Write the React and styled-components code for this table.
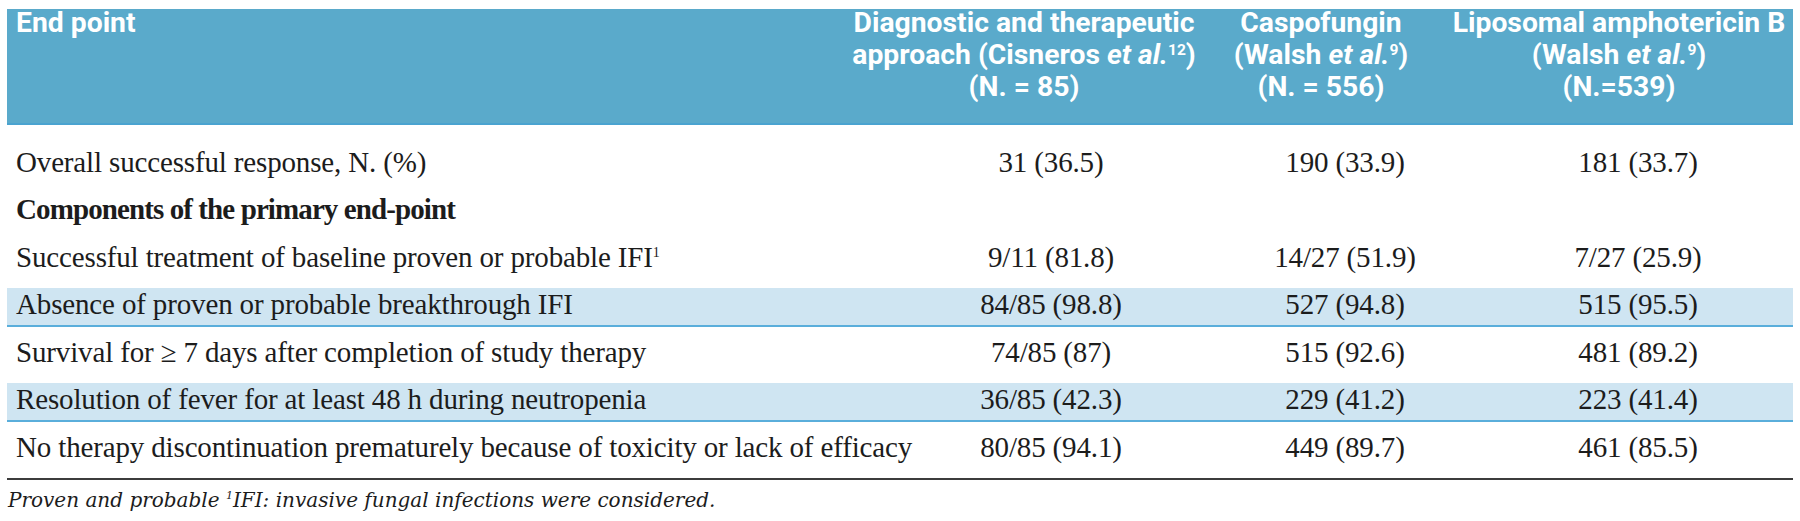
import styled, { createGlobalStyle } from "styled-components";

const GlobalStyle = createGlobalStyle`
  body {
    margin: 0;
    background: #ffffff;
  }
`;

const Page = styled.div`
  padding: 9px 7px 0;
  width: 1786px;
`;

const Table = styled.div`
  display: flex;
  flex-direction: column;
`;

const columns = "898px 292px 296px 290px";

const HeaderRow = styled.div`
  display: grid;
  grid-template-columns: ${columns};
  box-sizing: border-box;
  height: 116px;
  padding-right: 10px;
  background: #5aaacb;
  border-bottom: 2px solid #4aa3d0;
  color: #ffffff;
  font-family: Roboto, "Roboto Condensed", "Liberation Sans", sans-serif;
  font-stretch: 88%;
  font-weight: 700;
  font-size: 28.3px;
  line-height: 32px;
`;

const HeadCell = styled.div`
  display: flex;
  flex-direction: column;
  align-items: ${(p) => (p.$left ? "flex-start" : "center")};
  margin-top: -2px;
  padding-left: ${(p) => (p.$left ? "9px" : "0")};
  padding-right: ${(p) => p.$shift || 0}px;
`;

const HeadLine = styled.span`
  white-space: nowrap;
`;

const Sup = styled.sup`
  font-size: ${(p) => p.$size || "0.55em"};
  line-height: 0;
  vertical-align: ${(p) => p.$lift || "0.6em"};
`;

const Body = styled.div`
  display: flex;
  flex-direction: column;
  gap: 9px;
  padding: 20.5px 0 9px;
  border-bottom: 2px solid #3c3c3c;
  font-family: "Liberation Serif", "Times New Roman", serif;
  font-size: 29px;
  letter-spacing: -0.15px;
  color: #1c1c1c;
`;

const Row = styled.div`
  display: grid;
  grid-template-columns: ${columns};
  padding-right: 10px;
  height: 38.5px;
  box-sizing: border-box;
  padding-bottom: 3px;
  line-height: 33.5px;
  background: ${(p) => (p.$shaded ? "#cfe5f2" : "transparent")};
  border-bottom: 2px solid ${(p) => (p.$shaded ? "#5aaedb" : "transparent")};
`;

const Label = styled.div`
  padding-left: 9px;
  white-space: nowrap;
  font-weight: ${(p) => (p.$bold ? 700 : 400)};
  letter-spacing: ${(p) => (p.$bold ? "-0.9px" : "inherit")};
`;

const Value = styled.div`
  display: flex;
  justify-content: center;
  white-space: nowrap;
`;

const Footnote = styled.p`
  margin: 9px 0 0 1px;
  font-family: "DejaVu Serif", "Liberation Serif", serif;
  font-style: italic;
  font-size: 20px;
  line-height: 22px;
  color: #1c1c1c;
`;

const header = [
  {
    shift: 54,
    lines: [
      "Diagnostic and therapeutic",
      <>
        approach (Cisneros <i>et al.</i>
        <Sup>12</Sup>)
      </>,
      "(N. = 85)",
    ],
  },
  {
    shift: 48,
    lines: [
      "Caspofungin",
      <>
        (Walsh <i>et al.</i>
        <Sup>9</Sup>)
      </>,
      "(N. = 556)",
    ],
  },
  {
    shift: 38,
    lines: [
      "Liposomal amphotericin B",
      <>
        (Walsh <i>et al.</i>
        <Sup>9</Sup>)
      </>,
      "(N.=539)",
    ],
  },
];

const rows = [
  {
    label: "Overall successful response, N. (%)",
    values: ["31 (36.5)", "190 (33.9)", "181 (33.7)"],
  },
  { label: "Components of the primary end-point", bold: true, values: [] },
  {
    label: (
      <>
        Successful treatment of baseline proven or probable IFI
        <Sup $size="14px" $lift="10px">1</Sup>
      </>
    ),
    values: ["9/11 (81.8)", "14/27 (51.9)", "7/27 (25.9)"],
  },
  {
    label: "Absence of proven or probable breakthrough IFI",
    values: ["84/85 (98.8)", "527 (94.8)", "515 (95.5)"],
    shaded: true,
  },
  {
    label: "Survival for ≥ 7 days after completion of study therapy",
    values: ["74/85 (87)", "515 (92.6)", "481 (89.2)"],
  },
  {
    label: "Resolution of fever for at least 48 h during neutropenia",
    values: ["36/85 (42.3)", "229 (41.2)", "223 (41.4)"],
    shaded: true,
  },
  {
    label: "No therapy discontinuation prematurely because of toxicity or lack of efficacy",
    values: ["80/85 (94.1)", "449 (89.7)", "461 (85.5)"],
  },
];

export default function App() {
  return (
    <Page>
      <GlobalStyle />
      <Table>
        <HeaderRow>
          <HeadCell $left>
            <HeadLine>End point</HeadLine>
          </HeadCell>
          {header.map((col, i) => (
            <HeadCell key={i} $shift={col.shift}>
              {col.lines.map((line, j) => (
                <HeadLine key={j}>{line}</HeadLine>
              ))}
            </HeadCell>
          ))}
        </HeaderRow>
        <Body>
          {rows.map((row, i) => (
            <Row key={i} $shaded={row.shaded}>
              <Label $bold={row.bold}>{row.label}</Label>
              {row.values.map((v, j) => (
                <Value key={j}>{v}</Value>
              ))}
            </Row>
          ))}
        </Body>
      </Table>
      <Footnote>
        Proven and probable <Sup $size="11px" $lift="8px">1</Sup>IFI: invasive fungal
        infections were considered.
      </Footnote>
    </Page>
  );
}
